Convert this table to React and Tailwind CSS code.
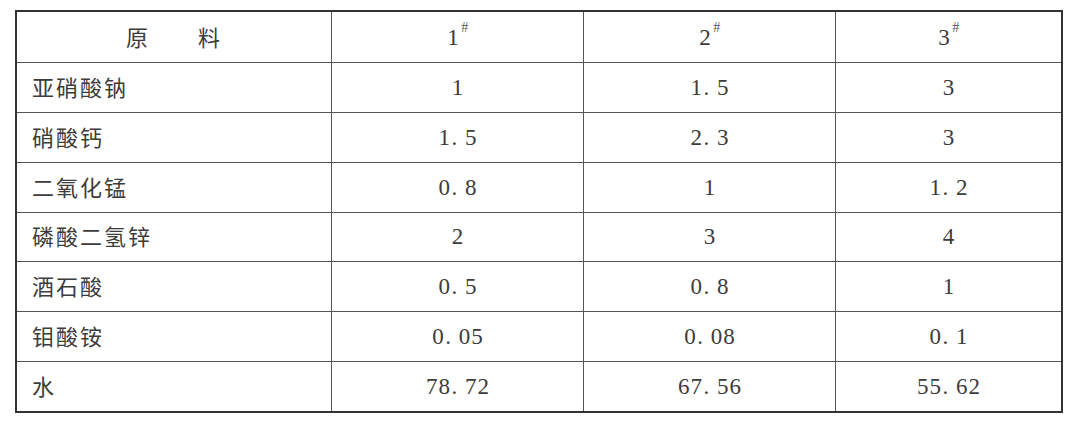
import React from "react";

const rows = [
  ["亚硝酸钠", "1", "1.5", "3"],
  ["硝酸钙", "1.5", "2.3", "3"],
  ["二氧化锰", "0.8", "1", "1.2"],
  ["磷酸二氢锌", "2", "3", "4"],
  ["酒石酸", "0.5", "0.8", "1"],
  ["钼酸铵", "0.05", "0.08", "0.1"],
  ["水", "78.72", "67.56", "55.62"],
];

const cjk = { fontFamily: '"Noto Sans CJK SC", "Noto Sans", sans-serif' };
const serif = { fontFamily: '"Liberation Serif", "DejaVu Serif", serif' };

function Num({ v }) {
  return (
    <span className="inline-flex text-[23px] leading-none text-[#3c3c3c]" style={serif}>
      {v.split("").map((c, i) =>
        c === "." ? (
          <span key={i} className="inline-block w-[14px] pl-[1px] text-left">.</span>
        ) : (
          <span key={i} className="inline-block w-[12.5px] text-center">{c}</span>
        )
      )}
    </span>
  );
}

function Head({ n }) {
  return (
    <span className="inline-flex items-start leading-none text-[#3c3c3c] mt-[2px]" style={serif}>
      <span className="text-[23px] w-[12.5px] text-center">{n}</span>
      <span className="text-[14px] ml-[2px] -mt-[5px] text-[#555]">#</span>
    </span>
  );
}

export default function App() {
  return (
    <div className="w-[1081px] h-[429px] bg-white pt-[10px] pl-[15px]">
      <div className="w-[1048px] h-[403px] border-2 border-[#333] grid grid-cols-[314px_252px_252px_1fr] grid-rows-8">
        <div className="flex items-center justify-center text-[22px] text-[#3c3c3c]" style={cjk}>
          <span className="tracking-[2px]">原　　料</span>
        </div>
        {["1", "2", "3"].map((n) => (
          <div key={n} className="border-l border-[#555] flex items-center justify-center">
            <Head n={n} />
          </div>
        ))}
        {rows.map((r, ri) => (
          <React.Fragment key={ri}>
            <div className="border-t border-[#555] flex items-center pl-[15px] text-[22px] text-[#3c3c3c]" style={cjk}>
              <span className="tracking-[2px] -mt-[2px]">{r[0]}</span>
            </div>
            {r.slice(1).map((v, ci) => (
              <div key={ci} className="border-t border-l border-[#555] flex items-center justify-center">
                <Num v={v} />
              </div>
            ))}
          </React.Fragment>
        ))}
      </div>
    </div>
  );
}
